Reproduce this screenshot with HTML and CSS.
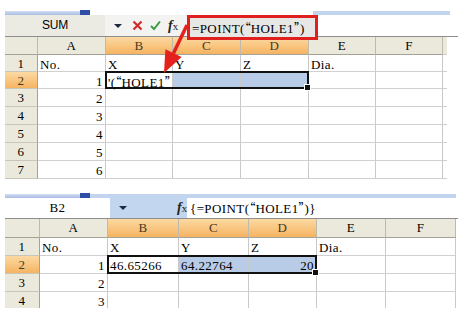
FILE: index.html
```html
<!DOCTYPE html>
<html lang="en">
<head>
    <meta charset="UTF-8">
    <title>POINT formula</title>
    <link rel="stylesheet" href="styles.css">
</head>
<body>
    <div class="page">
        <!-- before: typing the formula -->
        <div class="sheet first">
            <div class="title">
                <span class="tab"><span class="tab-end"></span></span>
                <span class="gap"></span>
                <span class="rest"></span>
            </div>
            <div class="fbar">
                <div class="namebox sans">SUM</div>
                <div class="tools">
                    <span class="drop"></span>
                    <svg class="ico" width="11" height="11" viewBox="0 0 11 11"><path d="M1.5 1.5 L9.5 9.5 M9.5 1.5 L1.5 9.5" stroke="#d42a2a" stroke-width="2.2" fill="none"/></svg>
                    <svg class="ico" width="11" height="11" viewBox="0 0 11 11"><path d="M1 6 L4 9 L10 1.5" stroke="#3b9b45" stroke-width="2" fill="none"/></svg>
                    <span class="fx"><i>f</i>x</span>
                </div>
                <div class="formula editing">=POINT(<span class="q">“</span>HOLE1<span class="q">”</span>)</div>
            </div>
            <div class="grid g1">
                <div class="ch corner"></div><div class="ch">A</div><div class="ch on">B</div><div class="ch on">C</div><div class="ch on">D</div><div class="ch">E</div><div class="ch">F</div><div class="ch stub"></div>

                <div class="rh">1</div><div class="c">No.</div><div class="c">X</div><div class="c">Y</div><div class="c">Z</div><div class="c">Dia.</div><div class="c"></div><div class="stub"></div>
                <div class="rh on">2</div><div class="c n">1</div><div class="c act">'(<span class="q">“</span>HOLE1<span class="q">”</span></div><div class="c hl"></div><div class="c hl"></div><div class="c"></div><div class="c"></div><div class="stub"></div>
                <div class="rh">3</div><div class="c n">2</div><div class="c"></div><div class="c"></div><div class="c"></div><div class="c"></div><div class="c"></div><div class="stub"></div>
                <div class="rh">4</div><div class="c n">3</div><div class="c"></div><div class="c"></div><div class="c"></div><div class="c"></div><div class="c"></div><div class="stub"></div>
                <div class="rh">5</div><div class="c n">4</div><div class="c"></div><div class="c"></div><div class="c"></div><div class="c"></div><div class="c"></div><div class="stub"></div>
                <div class="rh">6</div><div class="c n">5</div><div class="c"></div><div class="c"></div><div class="c"></div><div class="c"></div><div class="c"></div><div class="stub"></div>
                <div class="rh">7</div><div class="c n">6</div><div class="c"></div><div class="c"></div><div class="c"></div><div class="c"></div><div class="c"></div><div class="stub"></div>

                <div class="sel"></div>
            </div>
            <svg class="arrow" width="200" height="70" viewBox="0 0 200 70">
                <line x1="182" y1="14" x2="168.5" y2="42.2" stroke="#e4211d" stroke-width="3.5"/>
                <polygon points="159,62 176.6,46.1 160.4,38.3" fill="#e4211d"/>
            </svg>
        </div>

        <!-- after: array formula entered -->
        <div class="sheet second">
            <div class="title">
                <span class="tab"><span class="tab-end"></span></span>
                <span class="rest"></span>
            </div>
            <div class="fbar">
                <div class="namebox">B2</div>
                <div class="tools blue">
                    <span class="drop"></span>
                    <span class="fx"><i>f</i>x</span>
                </div>
                <div class="formula">{=POINT(<span class="q">“</span>HOLE1<span class="q">”</span>)}</div>
            </div>
            <div class="grid g2">
                <div class="ch corner"></div><div class="ch">A</div><div class="ch on">B</div><div class="ch on">C</div><div class="ch on">D</div><div class="ch">E</div><div class="ch">F</div>

                <div class="rh">1</div><div class="c">No.</div><div class="c">X</div><div class="c">Y</div><div class="c">Z</div><div class="c">Dia.</div><div class="c"></div>
                <div class="rh on">2</div><div class="c n">1</div><div class="c act">46.65266</div><div class="c hl">64.22764</div><div class="c hl n">20</div><div class="c"></div><div class="c"></div>
                <div class="rh">3</div><div class="c n">2</div><div class="c"></div><div class="c"></div><div class="c"></div><div class="c"></div><div class="c"></div>
                <div class="rh last">4</div><div class="c n last">3</div><div class="c last"></div><div class="c last"></div><div class="c last"></div><div class="c last"></div><div class="c last"></div>

                <div class="sel"></div>
            </div>
        </div>
    </div>
</body>
</html>
```

FILE: styles.css
```css
body {
    margin: 0;
    background: #ffffff;
    color: #000000;
    font-family: "Liberation Serif", serif;
    font-size: 13px;
    letter-spacing: 0.4px;
}
.page {
    padding: 11px 0 0 5px;
}
.sheet {
    position: relative;
}
.second {
    margin-top: 15px;
}

/* window title strip */
.title {
    display: flex;
    height: 4px;
}
.tab {
    display: flex;
    justify-content: flex-end;
    width: 85px;
    background: linear-gradient(#d3ddf2, #a9bde3);
}
.tab-end {
    width: 10px;
    margin-top: -1px;
    height: 5px;
    background: #2f4fa6;
}
.first .gap {
    width: 223px;
}
.first .rest {
    width: 137px;
    background: #c3d4ef;
}
.second .rest {
    width: 366px;
    background: #c3d4ef;
}

/* formula bar */
.fbar {
    display: flex;
    height: 21px;
}
.second .fbar {
    height: 20px;
}
.namebox {
    width: 100px;
    text-align: center;
    line-height: 20px;
    background: #ecebe3;
}
.second .namebox {
    width: 105px;
    background: #ffffff;
}
.sans {
    font-family: "Liberation Sans", sans-serif;
    font-size: 12px;
    letter-spacing: -0.3px;
}
.tools {
    display: flex;
    align-items: center;
    width: 82px;
    padding-left: 9px;
    box-sizing: border-box;
    background: #f3f3f1;
}
.tools.blue {
    width: 77px;
    padding-left: 9px;
    background: #c3d6f0;
}
.drop {
    width: 0;
    height: 0;
    border-left: 4px solid transparent;
    border-right: 4px solid transparent;
    border-top: 4px solid #1d2a3e;
    margin-right: 10px;
}
.blue .drop {
    margin-right: 50px;
}
.ico {
    margin-right: 7px;
}
.fx {
    font-size: 11px;
    letter-spacing: 0;
    color: #222222;
}
.fx i {
    font-size: 14px;
    font-weight: bold;
}
.formula {
    flex: 1;
    padding-left: 3px;
    line-height: 20px;
    white-space: nowrap;
}
.formula.editing {
    flex: none;
    position: relative;
    z-index: 2;
    width: 131px;
    height: 25px;
    box-sizing: border-box;
    border: 3px solid #e0201e;
    background: #e7e7e5;
    padding-left: 2px;
    line-height: 19px;
}
.q {
    font-family: "Noto Sans CJK SC", sans-serif;
    font-size: 12px;
    letter-spacing: 0;
}

/* cell grid */
.grid {
    position: relative;
    display: grid;
    border-top: 1px solid #8e8e8e;
    line-height: 17px;
}
.g1 {
    grid-template-columns: 33px 68px 67px 68px 68px 67px 67px 4px;
    grid-template-rows: 18px 17px 17px 18px 18px 18px 18px 18px;
}
.g2 {
    grid-template-columns: 35px 68px 71px 70px 68px 69px 70px;
    grid-template-rows: 19px 18px 18px 18px 16px;
}
.grid > div {
    box-sizing: border-box;
    white-space: nowrap;
}
.ch {
    text-align: center;
    background: #ebe9dc;
    border-right: 1px solid #bdbaae;
    border-bottom: 1px solid #a4a296;
}
.ch.on,
.rh.on {
    background: linear-gradient(#fcd9a2, #f5b462);
    color: #4a3a20;
}
.ch.stub {
    border-right: none;
}
.rh {
    text-align: center;
    background: #ebe9dc;
    border-right: 1px solid #a4a296;
    border-bottom: 1px solid #c8c6ba;
}
.c {
    padding: 1px 2px 0;
    border-right: 1px solid #c9c9c9;
    border-bottom: 1px solid #d0d0d0;
}
.stub {
    border-bottom: 1px solid #d0d0d0;
}
.n {
    text-align: right;
}
.hl {
    background: #b8cce8;
}
.act {
    background: #ffffff;
    position: relative;
    z-index: 1;
}
.last {
    border-bottom: none !important;
}
.sel {
    position: absolute;
    grid-row: 3 / 4;
    grid-column: 3 / 6;
    top: -1px;
    left: -1px;
    right: 0;
    bottom: 0;
    border: 2px solid #111111;
    z-index: 2;
}
.sel::after {
    content: "";
    position: absolute;
    right: -4px;
    bottom: -4px;
    width: 5px;
    height: 5px;
    background: #111111;
    border: 1px solid #ffffff;
}

.arrow {
    position: absolute;
    left: 0;
    top: 0;
    z-index: 3;
}
```
